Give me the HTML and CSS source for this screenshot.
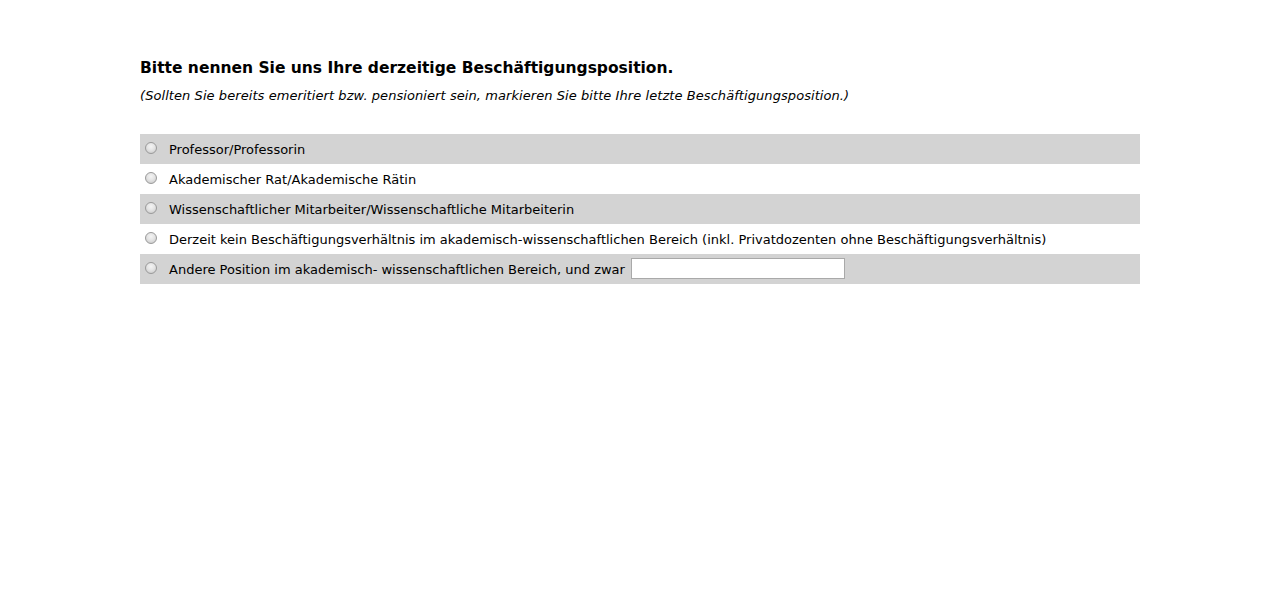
FILE: index.html
```html
<!DOCTYPE html>
<html lang="de">
<head>
<meta charset="utf-8">
<title>Beschäftigungsposition</title>
<link rel="stylesheet" href="styles.css">
</head>
<body>
<div class="page">
  <h1 class="question">Bitte nennen Sie uns Ihre derzeitige Beschäftigungsposition.</h1>
  <p class="hint">(Sollten Sie bereits emeritiert bzw. pensioniert sein, markieren Sie bitte Ihre letzte Beschäftigungsposition.)</p>
  <div class="options">
    <label class="option alt"><input type="radio" name="pos" class="radio"><span>Professor/Professorin</span></label>
    <label class="option"><input type="radio" name="pos" class="radio"><span>Akademischer Rat/Akademische Rätin</span></label>
    <label class="option alt"><input type="radio" name="pos" class="radio"><span>Wissenschaftlicher Mitarbeiter/Wissenschaftliche Mitarbeiterin</span></label>
    <label class="option"><input type="radio" name="pos" class="radio"><span>Derzeit kein Beschäftigungsverhältnis im akademisch-wissenschaftlichen Bereich (inkl. Privatdozenten ohne Beschäftigungsverhältnis)</span></label>
    <label class="option alt"><input type="radio" name="pos" class="radio"><span>Andere Position im akademisch- wissenschaftlichen Bereich, und zwar</span><input type="text" class="other"></label>
  </div>
</div>
</body>
</html>
```
FILE: styles.css
```css
html, body {
  margin: 0;
  padding: 0;
  background: #ffffff;
}
body {
  font-family: "DejaVu Sans", Verdana, sans-serif;
  color: #000000;
}
.page {
  width: 1000px;
  margin: 0 auto;
  padding-top: 58px;
}
.question {
  margin: 0;
  font-size: 15.5px;
  font-weight: bold;
  line-height: 20px;
}
.hint {
  margin: 8px 0 0 0;
  font-size: 13px;
  font-style: italic;
  line-height: 20px;
  letter-spacing: 0.07px;
}
.options {
  margin-top: 28px;
  display: flex;
  flex-direction: column;
}
.option {
  height: 30px;
  display: flex;
  align-items: center;
  font-size: 13px;
  line-height: 16px;
}
.option > span {
  padding-top: 2px;
}
.option.alt {
  background: #d3d3d3;
}
.radio {
  -webkit-appearance: none;
  appearance: none;
  box-sizing: border-box;
  width: 12px;
  height: 12px;
  margin: 0 12px 2px 5px;
  border-radius: 50%;
  border: 1px solid #9a9a9a;
  background: radial-gradient(circle at 50% 35%, #f4f4f4 0%, #e4e4e4 45%, #c4c4c4 100%);
  flex: none;
}
.other {
  box-sizing: border-box;
  width: 214px;
  height: 21px;
  margin: 0 0 1px 6px;
  border: 1px solid #a9a9a9;
  background: #ffffff;
  padding: 0 2px;
  font-size: 13px;
}
```
